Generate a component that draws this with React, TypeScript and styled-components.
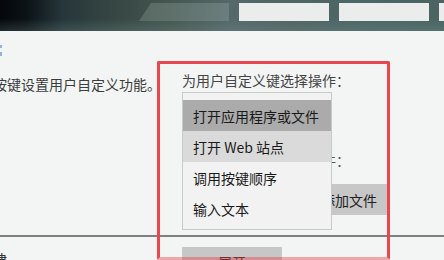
import React, { FC } from 'react'
import styled, { createGlobalStyle } from 'styled-components'

const ACTIONS = ['打开应用程序或文件', '打开 Web 站点', '调用按键顺序', '输入文本'];

const App: FC = () => {
  const selected = 0;
  const hovered = 1;

  return (
    <>
      <GlobalStyle />
      <Page>
        <Header>
          <Card faint />
          <Card />
          <Card />
          <Card />
        </Header>

        <Main>
          <LeftColumn>
            <BlueMark />
            <Description>{"按键设置用户自定义功能。"}</Description>
          </LeftColumn>

          <RightColumn>
            <Title>{"为用户自定义键选择操作："}</Title>
            <SelectBox />
            <Label>{"指定要打开的程序或文件："}</Label>
            <FileRow>
              <FileInput />
              <GrayButton>{"添加文件"}</GrayButton>
            </FileRow>
          </RightColumn>
        </Main>

        <Divider />

        <Footer>
          <FooterText>{"规律"}</FooterText>
          <ExpandButton>{"展开"}</ExpandButton>
        </Footer>

        <Dropdown>
          {ACTIONS.map((action, i) => (
            <DropdownItem key={action} selected={i === selected} hovered={i === hovered}>
              {action}
            </DropdownItem>
          ))}
        </Dropdown>

        <Highlight />
      </Page>
    </>
  );
};

export default App;

const GlobalStyle = createGlobalStyle`
  html, body {
    margin: 0;
    padding: 0;
    background: #f3f5f4;
    overflow: hidden;
  }

  body {
    font-family: "Noto Sans CJK SC", "Noto Sans", sans-serif;
    font-size: 14px;
  }
`;

const Page = styled.div`
  position: relative;
  width: 444px;
  height: 260px;
  overflow: hidden;
  background: #f3f5f4;
  display: flex;
  flex-direction: column;
`;

const Header = styled.div`
  height: 31px;
  flex-shrink: 0;
  display: flex;
  gap: 10px;
  padding: 3px 0 0 139px;
  box-sizing: border-box;
  background:
    linear-gradient(180deg, rgba(0, 0, 0, 0) 60%, rgba(120, 150, 148, 0.25) 100%),
    linear-gradient(90deg, #04070a 0%, #0c1317 6%, #26363a 14%, #394a46 28%, #44564f 38%, #55686a 52%, #506463 66%, #4c6666 82%, #4b6462 100%);
`;

const Card = styled.div<{ faint?: boolean }>`
  width: 90px;
  height: 18px;
  flex-shrink: 0;
  background: ${({ faint }) => (faint ? 'rgba(200, 215, 210, 0.2)' : '#ebeded')};
  clip-path: ${({ faint }) => (faint ? 'polygon(12px 0, 100% 0, 100% 100%, 0 100%)' : 'none')};
`;

const Main = styled.div`
  display: grid;
  grid-template-columns: 182px 1fr;
  height: 194px;
  flex-shrink: 0;
`;

const LeftColumn = styled.div`
  display: flex;
  flex-direction: column;
  padding-top: 14px;
  overflow: hidden;
`;

const BlueMark = styled.div`
  width: 2px;
  height: 12px;
  background: linear-gradient(180deg, #8fb4e0 0 3px, transparent 3px 7px, #8fb4e0 7px 11px, transparent 11px);
`;

const Description = styled.div`
  margin: 17px 0 0 -7px;
  line-height: 20px;
  color: #3c3c3c;
  white-space: nowrap;
`;

const RightColumn = styled.div`
  display: flex;
  flex-direction: column;
  padding-top: 39px;
`;

const Title = styled.div`
  line-height: 20px;
  color: #444;
  white-space: nowrap;
`;

const SelectBox = styled.div`
  margin-top: 2px;
  width: 150px;
  height: 30px;
  box-sizing: border-box;
  border: 1px solid #c8c8c8;
  background: #f2f2f2;
`;

const Label = styled.div`
  margin-top: 28px;
  line-height: 20px;
  color: #555;
  white-space: nowrap;
`;

const FileRow = styled.div`
  margin-top: 14px;
  display: flex;
  gap: 6px;
  height: 31px;
`;

const FileInput = styled.div`
  width: 123px;
  box-sizing: border-box;
  border: 1px solid #c8c8c8;
  background: #fff;
`;

const GrayButton = styled.div`
  width: 76px;
  display: flex;
  align-items: center;
  justify-content: center;
  background: #c6c7c6;
  color: #1e1e1e;
`;

const Divider = styled.div`
  height: 2px;
  margin-top: 10px;
  flex-shrink: 0;
  background: #808080;
`;

const Footer = styled.div`
  display: grid;
  grid-template-columns: 182px 1fr;
  padding-top: 10px;
  flex-shrink: 0;
`;

const FooterText = styled.div`
  margin: 2px 0 0 -21px;
  line-height: 20px;
  color: #333;
  white-space: nowrap;
`;

const ExpandButton = styled.div`
  width: 100px;
  height: 30px;
  display: flex;
  align-items: center;
  justify-content: center;
  background: #c6c7c6;
  color: #1e1e1e;
  line-height: 20px;
`;

const Dropdown = styled.div`
  position: absolute;
  left: 182px;
  top: 92px;
  width: 150px;
  height: 138px;
  box-sizing: border-box;
  padding-top: 7px;
  border: 1px solid #c9c9c9;
  background: #f2f2f2;
`;

const DropdownItem = styled.div<{ selected: boolean; hovered: boolean }>`
  height: 31px;
  display: flex;
  align-items: center;
  padding-left: 10px;
  color: #1a1a1a;
  white-space: nowrap;
  background: ${({ selected, hovered }) => (selected ? '#ababab' : hovered ? '#dadada' : 'transparent')};
`;

const Highlight = styled.div`
  position: absolute;
  left: 157px;
  top: 61px;
  width: 233px;
  height: 199px;
  box-sizing: border-box;
  border: 3px solid #e9474d;
  border-bottom-color: rgba(233, 71, 77, 0.45);
  border-radius: 2px;
  pointer-events: none;
`;
